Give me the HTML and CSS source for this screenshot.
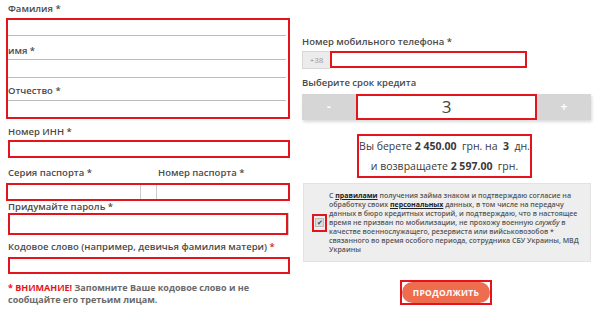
FILE: index.html
```html
<!DOCTYPE html>
<html lang="ru">
<head>
<meta charset="utf-8">
<title>Анкета</title>
<link rel="stylesheet" href="styles.css">
</head>
<body>
<div class="page">
  <div class="col-left">
    <div class="lbl lbl-first">Фамилия *</div>
    <div class="group">
      <div class="gin gin-1"></div>
      <div class="lbl lbl-in lbl-imya">имя *</div>
      <div class="gin gin-2"></div>
      <div class="lbl lbl-in lbl-otch">Отчество *</div>
      <div class="gin gin-3"></div>
    </div>
    <div class="lbl lbl-inn">Номер ИНН *</div>
    <div class="field field-inn"></div>
    <div class="pair-labels">
      <div class="lbl">Серия паспорта *</div>
      <div class="lbl">Номер паспорта *</div>
    </div>
    <div class="field field-pass">
      <div class="pp pp-series"></div>
      <div class="pp pp-mid"></div>
      <div class="pp pp-num"></div>
    </div>
    <div class="lbl lbl-pwd">Придумайте пароль *</div>
    <div class="field field-pwd"></div>
    <div class="lbl lbl-code">Кодовое слово (например, девичья фамилия матери) <span class="red">*</span></div>
    <div class="field field-code"></div>
    <p class="warn"><span class="red">* ВНИМАНИЕ!</span> Запомните Ваше кодовое слово и не<br>сообщайте его третьим лицам.</p>
  </div>
  <div class="col-right">
    <div class="lbl lbl-phone">Номер мобильного телефона *</div>
    <div class="phone">
      <span class="prefix">+38</span>
      <span class="field phone-input"></span>
    </div>
    <div class="lbl lbl-term">Выберите срок кредита</div>
    <div class="stepper">
      <span class="step-btn">-</span>
      <span class="step-val">3</span>
      <span class="step-btn">+</span>
    </div>
    <div class="summary">
      <div>Вы берете <b>2 450.00</b>&nbsp; грн. на &nbsp;<b>3</b>&nbsp; дн.</div>
      <div>и возвращаете <b>2 597.00</b>&nbsp; грн.</div>
    </div>
    <div class="consent">
      <div class="check-wrap"><span class="check">&#10004;</span></div>
      <p class="consent-text">С <u>правилами</u> получения займа знаком и подтверждаю согласие на<br>обработку своих <u>персональных</u> данных, в том числе на передачу<br>данных в бюро кредитных историй, и подтверждаю, что в настоящее<br>время не призван по мобилизации, не прохожу военную <i>службу</i> в<br>качестве военнослужащего, резервиста или вийськовозобов *<br>связанного во время особого периода, сотрудника СБУ Украины, МВД<br>Украины</p>
    </div>
    <div class="btn-wrap"><span class="btn">ПРОДОЛЖИТЬ</span></div>
  </div>
</div>
</body>
</html>
```

FILE: styles.css
```css
* { box-sizing: border-box; }
html, body { margin: 0; padding: 0; background: #fff; }
body {
  font-family: "Open Sans", "Liberation Sans", sans-serif;
  color: #4a4a4a;
  width: 594px;
  height: 315px;
  overflow: hidden;
}
.page {
  display: flex;
  gap: 12px;
  padding-left: 6px;
}
.col-left {
  width: 284px;
  display: flex;
  flex-direction: column;
}
.col-right {
  width: 289px;
  display: flex;
  flex-direction: column;
}
.lbl {
  font-size: 9.5px;
  font-weight: 600;
  line-height: 12px;
  height: 12px;
  white-space: nowrap;
  color: #4a4a4a;
}
.col-left > .lbl, .pair-labels { padding-left: 2px; }
.red { color: #e3141b; }
.lbl-first { margin-top: 3px; }
.group {
  margin-top: 3px;
  border: 2px solid #e3141b;
  display: flex;
  flex-direction: column;
}
.gin { margin: 0 0 0 0; border-color: #bdbdbd; border-style: solid; border-width: 0; }
.gin-1 { height: 16px; border-bottom-width: 1px; margin-right: 2px; }
.lbl-imya { margin-top: 9px; }
.gin-2 { margin-top: 2px; height: 19px; border-top-width: 1px; border-bottom-width: 1px; margin-right: 2px; }
.lbl-otch { margin-top: 7px; }
.gin-3 { margin-top: 3px; height: 17px; border-top-width: 1px; margin-right: 2px; }

.field { border: 2px solid #e3141b; background: #fff; }
.lbl-inn { margin-top: 7px; }
.field-inn { margin-top: 2px; height: 18px; margin-left: 2px; }
.pair-labels { margin-top: 9px; display: flex; }
.pair-labels .lbl:first-child { width: 150px; }
.field-pass { margin-top: 4px; height: 18px; display: flex; }
.pp-series { flex: 1; }
.pp-mid { width: 17px; border-left: 1px solid #cfcfcf; border-right: 1px solid #cfcfcf; }
.pp-num { width: 131px; }
.lbl-pwd { margin-top: 0; }
.field-pwd { margin: 0 2px; height: 22px; box-shadow: 1px 0 0 #ccc; }
.lbl-code { margin-top: 6px; }
.field-code { margin: 4px 0 0 2px; height: 17px; }
.warn {
  margin: 8px 0 0 2px;
  font-size: 9px;
  font-weight: 700;
  line-height: 12px;
  color: #6a6a6a;
}

.lbl-phone { margin-top: 36px; }
.phone { margin-top: 3px; display: flex; height: 18px; }
.prefix {
  width: 28px;
  background: #ececec;
  border: 1px solid #d8d8d8;
  border-right: 0;
  color: #9a9a9a;
  font-size: 8px;
  line-height: 16px;
  text-align: center;
}
.phone-input { width: 197px; height: 17px; }
.lbl-term { margin-top: 8px; }
.stepper {
  margin-top: 5px;
  height: 26px;
  display: grid;
  grid-template-columns: 54px 1fr 54px;
  background: #d6d6d6;
  box-shadow: 1px 2px 3px rgba(0,0,0,0.15);
}
.step-btn {
  color: #fff;
  font-size: 12px;
  font-weight: 700;
  line-height: 26px;
  text-align: center;
}
.step-val {
  background: #fff;
  border: 2px solid #e3141b;
  font-size: 17px;
  line-height: 22px;
  text-align: center;
  color: #444;
}
.summary {
  margin: 14px 0 0 55px;
  width: 175px;
  height: 44px;
  border: 2px solid #e3141b;
  font-size: 10.5px;
  line-height: 20px;
  text-align: center;
  color: #3a3a3a;
  white-space: nowrap;
}
.summary b { font-weight: 700; }
.consent {
  margin: 5px 0 0 1px;
  height: 79px;
  background: #eeeeee;
  border: 1px solid #e2e2e2;
  display: flex;
  align-items: center;
  padding-left: 8px;
}
.check-wrap {
  width: 15px;
  height: 18px;
  border: 2px solid #e3141b;
  display: flex;
  align-items: center;
  justify-content: center;
  flex: none;
}
.check {
  width: 9px;
  height: 9px;
  background: #dcdcdc;
  border: 1px solid #bbb;
  font-size: 7px;
  line-height: 7px;
  color: #444;
  text-align: center;
}
.consent-text {
  margin: 0 0 0 2px;
  font-size: 7px;
  font-weight: 600;
  line-height: 9.1px;
  color: #555;
  white-space: nowrap;
}
.consent-text u { color: #222; font-weight: 700; }
.btn-wrap {
  margin: 18px 0 0 98px;
  width: 92px;
  height: 25px;
  border: 2px solid #e3141b;
  display: flex;
  align-items: center;
  justify-content: center;
}
.btn {
  width: 88px;
  height: 21px;
  border-radius: 11px;
  background: #ee6d4f;
  color: #fff;
  font-size: 8.5px;
  font-weight: 700;
  letter-spacing: 0.3px;
  line-height: 21px;
  text-align: center;
}
```
